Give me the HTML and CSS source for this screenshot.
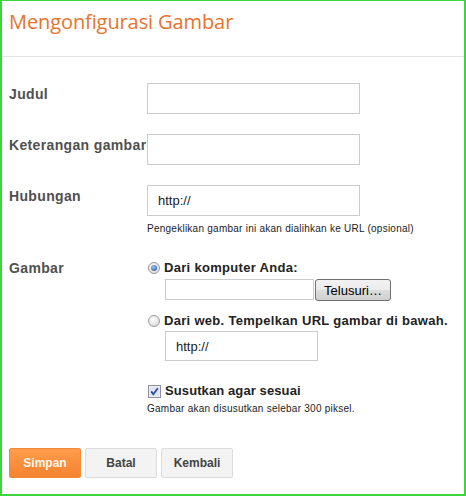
FILE: index.html
```html
<!DOCTYPE html>
<html lang="id">
<head>
    <meta charset="UTF-8">
    <title>Mengonfigurasi Gambar</title>
    <link rel="stylesheet" href="styles.css">
</head>
<body>
    <div class="dialog">
        <div class="header">
            <h1>Mengonfigurasi Gambar</h1>
        </div>

        <div class="form">
            <div class="row">
                <label>Judul</label>
                <input type="text" class="field">
            </div>
            <div class="row">
                <label>Keterangan gambar</label>
                <input type="text" class="field">
            </div>
            <div class="row link-row">
                <label>Hubungan</label>
                <input type="text" class="field" value="http://">
            </div>
            <div class="row hint-row">
                <span></span>
                <p class="hint">Pengeklikan gambar ini akan dialihkan ke URL (opsional)</p>
            </div>

            <div class="row image-row">
                <label>Gambar</label>
                <div class="sources">
                    <div class="option">
                        <span class="radio checked"></span>
                        <span>Dari komputer Anda:</span>
                    </div>
                    <div class="file">
                        <span class="file-name"></span>
                        <button class="browse">Telusuri…</button>
                    </div>
                    <div class="option second">
                        <span class="radio"></span>
                        <span>Dari web. Tempelkan URL gambar di bawah.</span>
                    </div>
                    <input type="text" class="url" value="http://">

                    <div class="option shrink">
                        <svg class="check" width="13" height="13" viewBox="0 0 13 13">
                            <rect x="0.5" y="0.5" width="12" height="12" fill="#f4f6fa" stroke="#8f8f9d"/>
                            <rect x="1.5" y="1.5" width="10" height="10" fill="#dfe4ef"/>
                            <path d="M3.2 6.4 L5.3 9.2 L9.8 3.2" fill="none" stroke="#2c4fa8" stroke-width="1.8"/>
                        </svg>
                        <span>Susutkan agar sesuai</span>
                    </div>
                    <p class="hint">Gambar akan disusutkan selebar 300 piksel.</p>
                </div>
            </div>
        </div>

        <div class="actions">
            <button class="primary">Simpan</button>
            <button>Batal</button>
            <button>Kembali</button>
        </div>
    </div>
</body>
</html>
```

FILE: styles.css
```css
body {
    margin: 0;
    background-color: #ffffff;
    font-family: "Liberation Sans", Arial, sans-serif;
}

.dialog {
    box-sizing: border-box;
    height: 496px;
    border: 2px solid #3ed43e;
    border-top-width: 1px;
}

.header {
    height: 55px;
    border-bottom: 1px solid #e3e3e3;
}

.header h1 {
    margin: 0;
    padding: 6px 0 0 7px;
    font-family: "Open Sans", sans-serif;
    font-weight: normal;
    font-size: 20px;
    line-height: 30px;
    letter-spacing: -0.1px;
    color: #e8732c;
}

.form {
    padding: 26px 0 0 7px;
}

.row {
    display: grid;
    grid-template-columns: 138px 1fr;
    margin-bottom: 20px;
}

.row label {
    padding-top: 3px;
    font-size: 14px;
    line-height: 16px;
    font-weight: bold;
    letter-spacing: 0.35px;
    color: #505050;
}

.field {
    box-sizing: border-box;
    width: 213px;
    height: 31px;
    margin: 0;
    padding: 0 10px;
    border: 1px solid #cccccc;
    font-family: "Liberation Sans", Arial, sans-serif;
    font-size: 13px;
    color: #222222;
}

.link-row {
    margin-bottom: 0;
}

.hint-row {
    margin: 6px 0 0;
}

.hint {
    margin: 0;
    font-size: 10px;
    line-height: 14px;
    letter-spacing: 0.25px;
    color: #222222;
}

.image-row {
    margin: 24px 0 0;
}

.image-row label {
    padding-top: 0;
}

.option {
    display: flex;
    align-items: center;
    gap: 3px;
    font-size: 13px;
    line-height: 16px;
    font-weight: bold;
    letter-spacing: 0.3px;
    color: #222222;
}

.radio {
    box-sizing: border-box;
    width: 12px;
    height: 12px;
    margin: 0 1px 0 1px;
    border-radius: 50%;
    border: 1px solid #9a9a9a;
    background: radial-gradient(circle at 40% 35%, #ffffff, #d4d4d4);
    position: relative;
}

.radio.checked::after {
    content: "";
    position: absolute;
    left: 2px;
    top: 2px;
    width: 6px;
    height: 6px;
    border-radius: 50%;
    background: radial-gradient(circle at 40% 35%, #9fc3f0, #1c4fa0);
}

.file {
    display: flex;
    margin: 3px 0 0 18px;
}

.file-name {
    box-sizing: border-box;
    width: 149px;
    height: 21px;
    border: 1px solid #cccccc;
}

.browse {
    box-sizing: border-box;
    width: 76px;
    height: 22px;
    margin-left: 1px;
    padding: 0;
    border: 1px solid #707070;
    border-radius: 3px;
    background: linear-gradient(to bottom, #f2f2f2, #ebebeb 50%, #dddddd 51%, #cfcfcf);
    font-family: "Liberation Sans", Arial, sans-serif;
    font-size: 13px;
    color: #000000;
}

.option.second {
    margin-top: 12px;
}

.url {
    box-sizing: border-box;
    display: block;
    width: 153px;
    height: 30px;
    margin: 2px 0 0 18px;
    padding: 0 10px;
    border: 1px solid #cccccc;
    font-family: "Liberation Sans", Arial, sans-serif;
    font-size: 13px;
    color: #222222;
}

.option.shrink {
    margin-top: 21px;
    font-size: 13px;
    line-height: 18px;
    letter-spacing: 0.1px;
    gap: 4px;
}

.check {
    margin-left: 1px;
}

.option.shrink + .hint {
    margin-top: 2px;
}

.actions {
    display: flex;
    gap: 4px;
    padding: 32px 0 0 7px;
}

.actions button {
    box-sizing: border-box;
    width: 72px;
    height: 30px;
    padding: 0;
    border: 1px solid #dcdcdc;
    border-radius: 2px;
    background: #f3f3f3;
    font-family: "Liberation Sans", Arial, sans-serif;
    font-size: 12px;
    font-weight: bold;
    color: #444444;
}

.actions button.primary {
    border-color: #f08a3a;
    background: linear-gradient(to bottom, #ff9c4c, #f5832f);
    color: #fff6ee;
}
```
